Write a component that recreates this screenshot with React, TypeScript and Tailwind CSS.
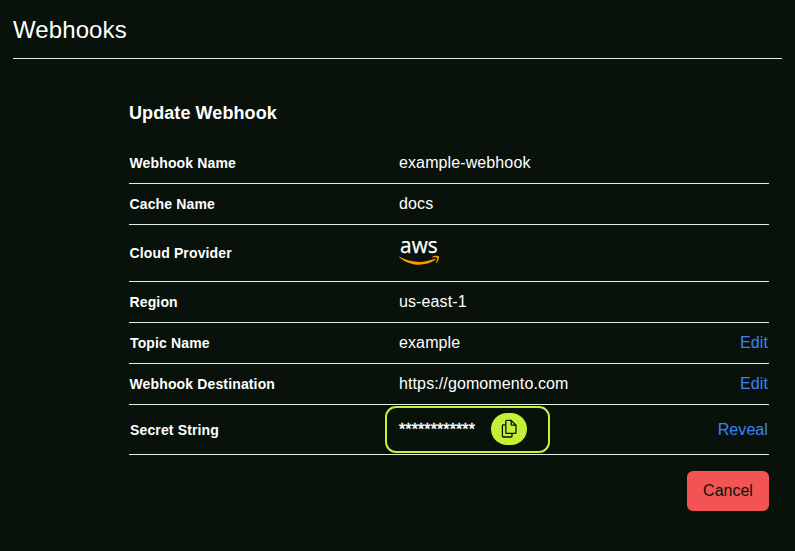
import type { ReactNode } from "react";

function AwsLogo() {
  return (
    <svg width="42" height="40" viewBox="0 -7 42 40" className="block overflow-visible" aria-label="aws">
      <text x="1" y="13.3" fontSize="21.5" fontWeight="400" stroke="#fff" strokeWidth="0.25" textLength="37.8" lengthAdjust="spacingAndGlyphs" fill="#fff" fontFamily="'Open Sans', 'Noto Sans', sans-serif">
        aws
      </text>
      <g transform="translate(0 0.8) scale(0.1325)" fill="#ff9900">
        <path d="M273.5,143.7c-32.9,24.3-80.7,37.2-121.8,37.2c-57.6,0-109.5-21.3-148.7-56.7c-3.1-2.8-0.3-6.6,3.4-4.4c42.4,24.6,94.7,39.5,148.8,39.5c36.5,0,76.6-7.6,113.5-23.2C274.2,133.6,278.9,139.7,273.5,143.7z" />
        <path d="M287.2,128.1c-4.2-5.4-27.8-2.6-38.5-1.3c-3.2,0.4-3.7-2.4-0.8-4.5c18.8-13.2,49.7-9.4,53.3-5c3.6,4.5-1,35.4-18.6,50.2c-2.7,2.3-5.3,1.1-4.1-1.9C282.5,155.7,291.4,133.4,287.2,128.1z" />
      </g>
    </svg>
  );
}

function CopyIcon() {
  return (
    <svg width="18" height="20" viewBox="0 0 18 20" fill="none" stroke="currentColor" strokeWidth="1.3" strokeLinejoin="round">
      <path d="M5.4 5.8H3.2q-.8 0-.8.8v10.6q0 .8.8.8h8q.8 0 .8-.8v-2.9" />
      <path d="M11.2 1.4H6.7q-.9 0-.9.9v11.1q0 .9.9.9h8.4q.9 0 .9-.9V6.2L11.2 1.4v4q0 .8.8.8h4" />
    </svg>
  );
}

function Row({ label, height = "h-[41px]", labelPad = "pl-[0.5px]", action, children }: { label: string; height?: string; labelPad?: string; action?: string; children: ReactNode }) {
  return (
    <div className={`flex items-center border-b border-[#e8ece9] ${height}`}>
      <div className={`w-[270px] shrink-0 text-sm font-bold tracking-[0.14px] ${labelPad}`}>{label}</div>
      <div className="flex flex-1 items-center text-base tracking-[0.11px]">{children}</div>
      {action && <button className="pr-px text-base tracking-[0.08px] text-[#3b82f6]">{action}</button>}
    </div>
  );
}

export default function App() {
  return (
    <div className="h-[551px] w-full overflow-hidden bg-[#08120b] pl-[13px] pr-[13px] font-['Liberation_Sans',Arial,sans-serif] text-white">
      <header className="flex h-[59px] items-center border-b border-[#e8ece9] pt-0.5">
        <h1 className="text-2xl tracking-[0.1px]">Webhooks</h1>
      </header>
      <main className="ml-[116px] w-[640px] pt-10">
        <h2 className="h-[44px] text-lg font-bold tracking-[0.08px]">Update Webhook</h2>
        <Row label="Webhook Name">example-webhook</Row>
        <Row label="Cache Name">docs</Row>
        <Row label="Cloud Provider" height="h-[57px]"><AwsLogo /></Row>
        <Row label="Region">us-east-1</Row>
        <Row label="Topic Name" labelPad="pl-px" action="Edit">example</Row>
        <Row label="Webhook Destination" action="Edit">https://gomomento.com</Row>
        <Row label="Secret String" height="h-[50px]" labelPad="pl-px" action="Reveal">
          <div className="-ml-[14px] flex h-[47px] w-[165px] items-center rounded-[11px] border-2 border-[#c4f135] pl-3">
            <span className="w-[92px] [-webkit-text-stroke:0.4px_white]">************</span>
            <button className="mb-px flex h-8 w-9 items-center justify-center rounded-full bg-[#c4f135] text-[#08120b]" aria-label="Copy">
              <CopyIcon />
            </button>
          </div>
        </Row>
        <div className="flex justify-end pt-4">
          <button className="h-10 w-[82px] rounded-md bg-[#f25454] text-base text-[#08120b]">Cancel</button>
        </div>
      </main>
    </div>
  );
}
